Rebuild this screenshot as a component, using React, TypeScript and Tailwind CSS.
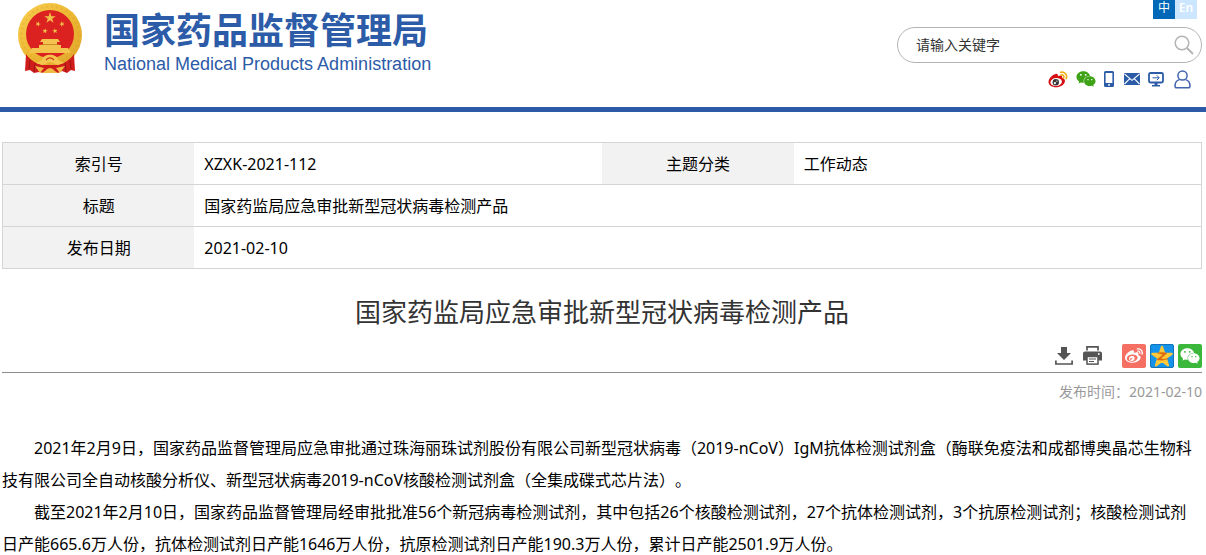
import { FaWeibo, FaWeixin } from "react-icons/fa";

const STAR = "M0,-10 L2.25,-3.09 L9.51,-3.09 L3.63,1.18 L5.88,8.09 L0,3.82 L-5.88,8.09 L-3.63,1.18 L-9.51,-3.09 L-2.25,-3.09 Z";

const Emblem = () => {
  return (
    <svg viewBox="0 0 66 71" className="w-[66px] h-[71px]" aria-hidden="true">
      <defs>
        <linearGradient id="gold" x1="0" y1="0" x2="1" y2="1">
          <stop offset="0" stopColor="#f8cf52" />
          <stop offset="0.5" stopColor="#edb832" />
          <stop offset="1" stopColor="#dfa52c" />
        </linearGradient>
      </defs>
      {/* Wheat ring */}
      <circle cx="33" cy="32" r="32" fill="url(#gold)" />
      <circle cx="33" cy="32" r="28.5" fill="none" stroke="#d99f2b" strokeWidth="2" strokeDasharray="2 3" opacity="0.35" />
      <circle cx="33" cy="31" r="24" fill="#dc2220" />
      {/* Red drapes */}
      <path d="M9 51 C14 58 20 61 26 62 H40 C46 61 52 58 57 51 L58 68 L54 67 L50 70 L45 68 L41 70 H26 L22 69 L17 70 L13 67 L8 68 Z" fill="#d01d1c" />
      <path d="M13 57 L12 66 M18 60 L17 69 M53 57 L54 66 M48 60 L49 69" stroke="#9a1512" strokeWidth="1" fill="none" />
      {/* Stars */}
      <g fill="#f2c04a">
        <path d={STAR} transform="translate(33 15) scale(0.6)" />
        <path d={STAR} transform="translate(21 21) rotate(20) scale(0.29)" />
        <path d={STAR} transform="translate(45 21) rotate(-20) scale(0.29)" />
        <path d={STAR} transform="translate(28 28) rotate(10) scale(0.29)" />
        <path d={STAR} transform="translate(38 28) rotate(-10) scale(0.29)" />
      </g>
      {/* Gate */}
      <path d="M25 36 H41 L43 39 H23 Z M26 39 H40 V42 H26 Z M22 42 H44 V45 H22 Z M15 45 H51 L54 50 H12 Z" fill="#f3c34e" />
      <path d="M24 41.5 H42" stroke="#b97120" strokeWidth="0.7" />
      {/* Cog and ribbon */}
      <path d="M25 57 C26 50 40 50 41 57 L47 60 L41 62 L33 59 L25 62 L19 60 Z" fill="#f5c64f" />
      <path d="M29 57 Q33 53 37 57" stroke="#ce3a1c" strokeWidth="1.2" fill="none" />
      <path d="M18 63 L27 65 L23 70 Z M48 63 L39 65 L43 70 Z M28 68 Q33 62 38 68 L41 70 H25 Z" fill="#f0bb45" />
    </svg>
  );
};

const WeiboColor = () => {
  return (
    <svg viewBox="0 0 20 17" className="w-5 h-[17px]" aria-hidden="true">
      <path d="M7.5 3 C9.5 2.4 10.3 3.6 9.8 5.2 C12 4.2 14.8 4.3 14.2 6.9 C16.3 7.5 17.2 8.6 16.9 10.4 C16.3 13.8 12.3 16.2 8.2 16.2 C4 16.2 0.4 14.1 0.5 10.7 C0.7 7.5 4.3 3.8 7.5 3 Z" fill="#d50f12" />
      <ellipse cx="8.2" cy="11" rx="5.8" ry="4" fill="#fff" transform="rotate(-8 8.2 11)" />
      <circle cx="7.8" cy="11.2" r="3.2" fill="#373737" />
      <circle cx="6.9" cy="12.1" r="1.1" fill="#fff" />
      <circle cx="8.9" cy="10.2" r="0.6" fill="#fff" />
      <path d="M12.6 1.3 C16.8 0.4 19.6 3.8 18.2 7.6 M13 4 C15.2 3.6 16.3 5 15.7 6.8" stroke="#efae1b" strokeWidth="1.6" strokeLinecap="round" fill="none" />
    </svg>
  );
};

const PhoneIcon = () => {
  return (
    <svg viewBox="0 0 10 16" className="w-2.5 h-4" aria-hidden="true">
      <path fillRule="evenodd" d="M1.5 0 H8.5 Q10 0 10 1.5 V14.5 Q10 16 8.5 16 H1.5 Q0 16 0 14.5 V1.5 Q0 0 1.5 0 Z M1.6 2 V12 H8.4 V2 Z" fill="#2c5ba7" />
      <rect x="4" y="13.2" width="2" height="1.4" fill="#fff" />
    </svg>
  );
};

const MailIcon = () => {
  return (
    <svg viewBox="0 0 16 12" className="w-4 h-3" aria-hidden="true">
      <rect width="16" height="12" rx="0.6" fill="#2c5ba7" />
      <path d="M0.5 1 L8 7.3 L15.5 1 M0.5 11 L5.8 5.7 M15.5 11 L10.2 5.7" stroke="#fff" strokeWidth="1.1" fill="none" />
    </svg>
  );
};

const MonitorIcon = () => {
  return (
    <svg viewBox="0 0 16 15" className="w-4 h-[15px]" aria-hidden="true">
      <rect x="1" y="1" width="14" height="9.5" rx="1.5" stroke="#2c5ba7" strokeWidth="1.8" fill="none" />
      <path d="M6.5 11 H9.5 V13 H12 V14.6 H4 V13 H6.5 Z" fill="#2c5ba7" />
      <path d="M4.5 5.8 H11 M8.8 3.4 L11.2 5.8 L8.8 8.2" stroke="#2c5ba7" strokeWidth="1" fill="none" />
    </svg>
  );
};

const UserIcon = () => {
  return (
    <svg viewBox="0 0 17 19" className="w-[17px] h-[19px]" aria-hidden="true">
      <circle cx="8.5" cy="5.5" r="4.6" stroke="#4464ae" strokeWidth="1.5" fill="none" />
      <path d="M5.4 9.6 C2.4 10.6 1 13 1 16 Q1 17.8 2.8 17.8 H14.2 Q16 17.8 16 16 C16 13 14.6 10.6 11.6 9.6" stroke="#4464ae" strokeWidth="1.5" fill="none" />
    </svg>
  );
};

const SearchIcon = () => {
  return (
    <svg viewBox="0 0 20 20" className="w-5 h-5" aria-hidden="true">
      <circle cx="8" cy="8" r="6.8" stroke="#b3b3b3" strokeWidth="1.5" fill="none" />
      <path d="M13 13 L19 19" stroke="#b3b3b3" strokeWidth="1.8" />
    </svg>
  );
};

const DownloadIcon = () => {
  return (
    <svg viewBox="0 0 18 18" className="w-[18px] h-[18px]" aria-hidden="true">
      <path d="M6 0 H12 V6 H16 L9 13 L2 6 H6 Z" fill="#555" />
      <path d="M0.9 13.5 V17 H17.1 V13.5" stroke="#555" strokeWidth="1.7" fill="none" />
    </svg>
  );
};

const PrintIcon = () => {
  return (
    <svg viewBox="0 0 19 19" className="w-[19px] h-[19px]" aria-hidden="true">
      <path d="M4 4.5 V0.9 H15 V4.5" stroke="#555" strokeWidth="1.7" fill="none" />
      <path d="M2 5.5 H17 Q19 5.5 19 7.5 V14.5 H15 V10 H4 V14.5 H0 V7.5 Q0 5.5 2 5.5 Z" fill="#555" />
      <rect x="4" y="10.5" width="11" height="7.6" stroke="#555" strokeWidth="1.5" fill="#fff" />
      <path d="M6 13 H13 M6 15.5 H11" stroke="#555" strokeWidth="1.2" />
      <circle cx="15.8" cy="8" r="0.9" fill="#fff" />
    </svg>
  );
};

const QzoneIcon = () => {
  return (
    <svg viewBox="-12 -12 24 24" className="w-6 h-6" aria-hidden="true">
      <rect x="-11.5" y="-11.5" width="23" height="23" rx="1.5" fill="#1593ea" stroke="#1273b8" />
      <path d={STAR} transform="translate(0 1) scale(1.02)" fill="#fdc93a" stroke="#fdc93a" strokeWidth="2.2" strokeLinejoin="round" />
      <path d="M-4.5 -3 Q0 -4 4.8 -2.8 L-1.6 2.8 Q2 3.6 6 2.6 Q0 5.4 -5 3.6 L1.4 -1.6 Q-1.5 -2 -4.5 -3 Z" fill="#d9660b" stroke="#d9660b" strokeWidth="0.5" />
    </svg>
  );
};

const labelCell = "w-[16%] bg-[#f2f2f2] text-center font-normal";
const valueCell = "px-2.5";

const App = () => {
  return (
    <div className="bg-white text-black text-base [text-spacing-trim:space-all] font-['Noto_Sans','Noto_Sans_CJK_SC',sans-serif]">
      {/* Header */}
      <header className="flex justify-between h-28 pl-4 pr-1 border-b-[5px] border-[#2d5aa6]">
        <a href="#home" className="flex items-start gap-5 pt-[3px] pl-px text-[#2c5ba7]">
          <Emblem />
          <span className="flex flex-col pt-[5px] pl-px">
            <span className="text-4xl leading-10 font-bold font-['Noto_Sans_CJK_SC',sans-serif]">国家药品监督管理局</span>
            <span className="mt-1 text-lg leading-6 font-['Liberation_Sans',sans-serif]">National Medical Products Administration</span>
          </span>
        </a>
        <div className="flex flex-col items-end">
          <div className="flex pr-[5px] text-xs leading-4 text-white">
            <button type="button" className="w-[22px] h-[19px] pb-1 bg-[#0068b7]">中</button>
            <button type="button" className="w-[22px] h-[19px] pb-1 bg-[#cce6ff] font-semibold">En</button>
          </div>
          <form className="flex items-center w-[305px] h-9 mt-2 pl-[18px] pr-[7px] border border-[#b3b3b3] rounded-full">
            <input type="text" aria-label="请输入关键字" placeholder="请输入关键字" className="flex-1 min-w-0 text-sm outline-none placeholder:text-[#333]" />
            <button type="submit" aria-label="搜索"><SearchIcon /></button>
          </form>
          <nav className="flex items-center h-[18px] mt-[7px] pr-[11px]">
            <a href="#weibo" aria-label="微博"><WeiboColor /></a>
            <a href="#weixin" aria-label="微信" className="ml-2"><FaWeixin className="w-5 h-5 text-[#3fa317]" /></a>
            <a href="#app" aria-label="手机版" className="ml-2"><PhoneIcon /></a>
            <a href="#mail" aria-label="邮箱" className="ml-2.5"><MailIcon /></a>
            <a href="#site" aria-label="网站" className="ml-2"><MonitorIcon /></a>
            <a href="#user" aria-label="用户" className="ml-2.5"><UserIcon /></a>
          </nav>
        </div>
      </header>

      <main className="pl-0.5 pr-1 pt-[30px]">
        {/* Document info */}
        <table className="w-full table-fixed border-collapse border border-[#d5d5d5]">
          <tbody>
            <tr className="h-[42px] border-b border-[#d5d5d5]">
              <th scope="row" className={labelCell}>索引号</th>
              <td className={valueCell}>XZXK-2021-112</td>
              <th scope="row" className={labelCell}>主题分类</th>
              <td className={valueCell}>工作动态</td>
            </tr>
            <tr className="h-[42px] border-b border-[#d5d5d5]">
              <th scope="row" className={labelCell}>标题</th>
              <td colSpan={3} className={valueCell}>国家药监局应急审批新型冠状病毒检测产品</td>
            </tr>
            <tr className="h-[42px]">
              <th scope="row" className={labelCell}>发布日期</th>
              <td colSpan={3} className={valueCell}>2021-02-10</td>
            </tr>
          </tbody>
        </table>

        <h1 className="mt-[23px] text-center text-[26px] leading-10 text-[#333]">国家药监局应急审批新型冠状病毒检测产品</h1>

        {/* Tools and share */}
        <div className="flex justify-end items-center h-10 border-b border-[#8c8c8c] mt-px pt-2 pb-0.5">
          <button type="button" aria-label="下载"><DownloadIcon /></button>
          <button type="button" aria-label="打印" className="ml-2.5"><PrintIcon /></button>
          <a href="#share-weibo" aria-label="分享到微博" className="flex items-center justify-center w-6 h-6 ml-5 rounded-xs bg-[#f56f63] text-white"><FaWeibo className="w-[18px] h-[18px]" /></a>
          <a href="#share-qzone" aria-label="分享到QQ空间" className="w-6 h-6 ml-1"><QzoneIcon /></a>
          <a href="#share-weixin" aria-label="分享到微信" className="flex items-center justify-center w-6 h-6 ml-1 rounded-xs bg-[#3bb83b] text-white"><FaWeixin className="w-5 h-5" /></a>
        </div>
        <p className="mt-[7px] text-right text-sm leading-6 text-[#999]">发布时间：2021-02-10</p>

        {/* Article */}
        <article className="mt-7 leading-8">
          <p className="indent-8">2021年2月9日，国家药品监督管理局应急审批通过珠海丽珠试剂股份有限公司新型冠状病毒（2019-nCoV）IgM抗体检测试剂盒（酶联免疫法和成都博奥晶芯生物科技有限公司全自动核酸分析仪、新型冠状病毒2019-nCoV核酸检测试剂盒（全集成碟式芯片法）。</p>
          <p className="indent-8">截至2021年2月10日，国家药品监督管理局经审批批准56个新冠病毒检测试剂，其中包括26个核酸检测试剂，27个抗体检测试剂，3个抗原检测试剂；核酸检测试剂日产能665.6万人份，抗体检测试剂日产能1646万人份，抗原检测试剂日产能190.3万人份，累计日产能2501.9万人份。</p>
        </article>
      </main>
    </div>
  );
};

export default App;
